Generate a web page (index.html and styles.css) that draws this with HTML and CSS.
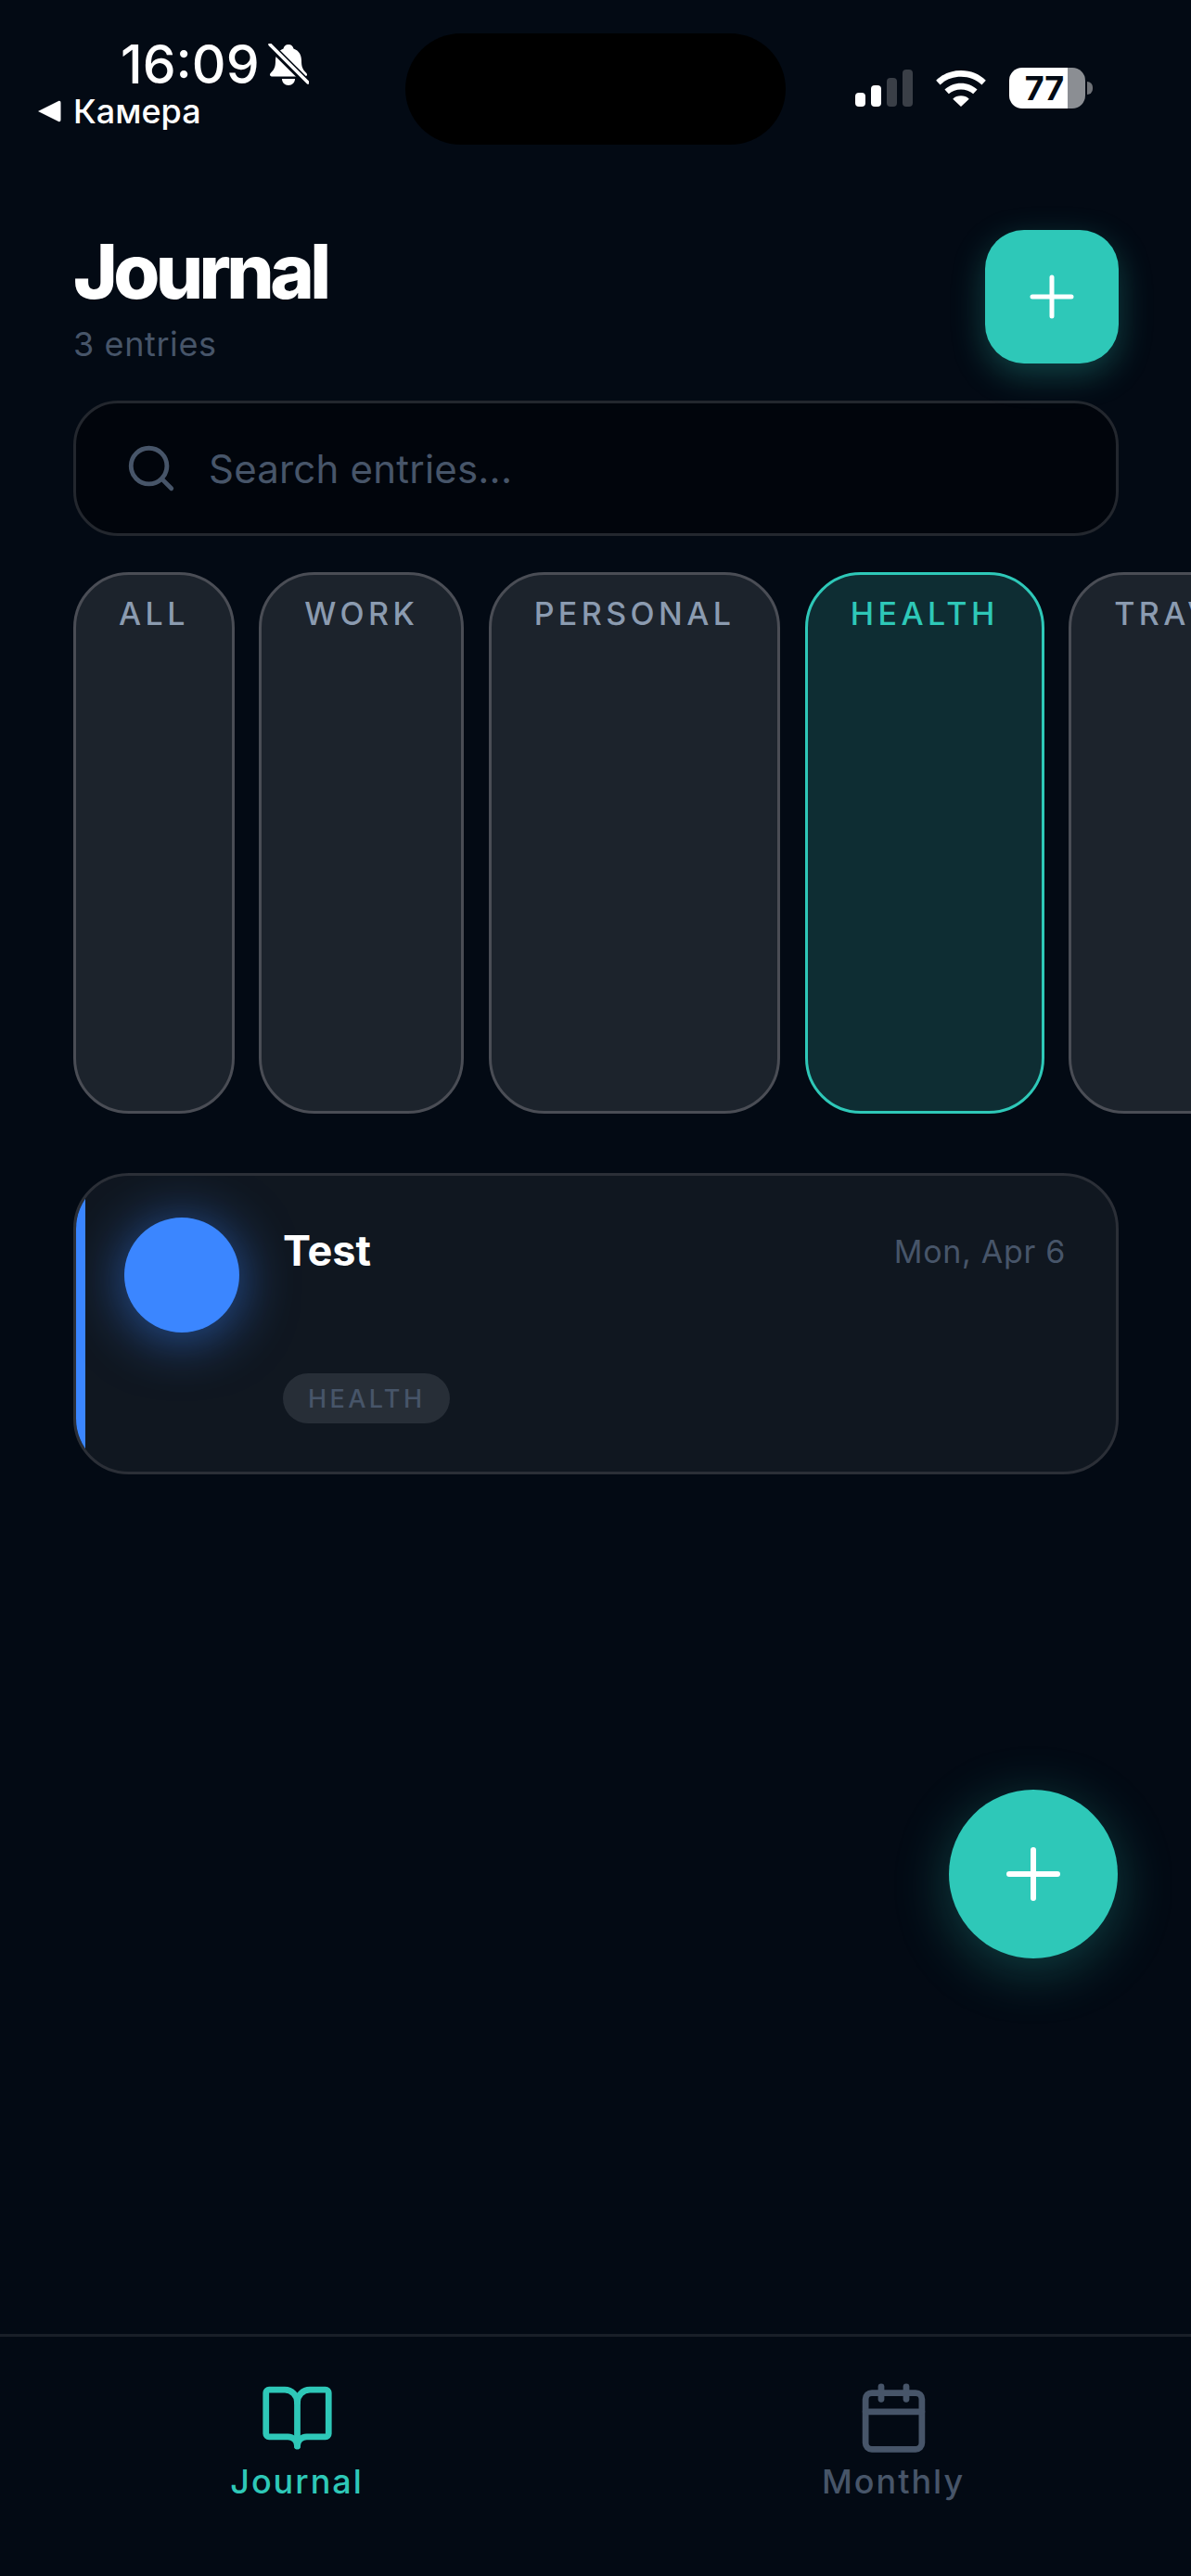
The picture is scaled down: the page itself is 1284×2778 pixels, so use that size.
FILE: index.html
```html
<!DOCTYPE html>
<html lang="en">
<head>
<meta charset="utf-8">
<title>Journal</title>
<link rel="stylesheet" href="styles.css">
</head>
<body>
<div class="phone">
  <header class="status">
    <div class="status-left">
      <div class="time-row">
        <span class="time">16:09</span>
        <svg class="bell" viewBox="0 0 44 46"><path fill="#fff" d="M22 1c3 0 5 2 5.500 4.500 6 2 8.500 7 8.500 13 0 6 1 9 5 13 2 2 1 4-2 4H5c-3 0-4-2-2-4 4-4 5-7 5-13 0-6 3-11 8.500-13C17 3 19 1 22 1zM15 38h14c0 4-3 7-7 7s-7-3-7-7z"/><path stroke="#030a14" stroke-width="8" d="M2 2l40 40"/><path stroke="#fff" stroke-width="3.500" stroke-linecap="round" d="M2 1l41 41"/></svg>
      </div>
      <div class="back-row">
        <svg class="back-arrow" viewBox="0 0 26 26"><path fill="#fff" d="M1 13L23 2c1.500-.6 2.500 0 2.500 2v18c0 2-1 2.600-2.500 2z"/></svg>
        <span class="back-label">Камера</span>
      </div>
    </div>
    <div class="status-right">
      <div class="signal">
        <i class="bar on b1"></i><i class="bar on b2"></i><i class="bar b3"></i><i class="bar b4"></i>
      </div>
      <svg class="wifi" viewBox="0 0 56 40"><path fill="#fff" d="M28 0c11 0 20.500 4 27.500 11l-4.500 5C45 10 37 7 28 7S11 10 5 16L.5 11C7.500 4 17 0 28 0zM28 14c7 0 13 2.500 18 7l-4.500 5c-3.500-3.200-8.500-5-13.500-5s-10 1.800-13.500 5L10 21c5-4.500 11-7 18-7zM28 28c3.500 0 6.500 1 9 3.500L28 40l-9-8.500c2.500-2.500 5.500-3.500 9-3.500z"/></svg>
      <div class="battery">
        <div class="battery-body"><span class="battery-num">77</span></div>
        <span class="battery-cap"></span>
      </div>
    </div>
  </header>
  <div class="island"></div>

  <main class="content">
    <section class="title-row">
      <div class="title-text">
        <h1 class="title">Journal</h1>
        <p class="count">3 entries</p>
      </div>
      <button class="add-btn" aria-label="Add">
        <svg class="plus" viewBox="0 0 48 48"><path d="M24 3v42M3 24h42"/></svg>
      </button>
    </section>

    <div class="search">
      <svg class="search-icon" viewBox="0 0 24 24"><circle cx="11" cy="11" r="8"/><path d="M21 21l-4.300-4.300"/></svg>
      <span class="search-text">Search entries...</span>
    </div>

    <div class="chips">
      <div class="chip">ALL</div>
      <div class="chip">WORK</div>
      <div class="chip">PERSONAL</div>
      <div class="chip active">HEALTH</div>
      <div class="chip">TRAVEL</div>
    </div>

    <article class="card">
      <div class="accent"></div>
      <div class="dot"></div>
      <div class="card-body">
        <div class="card-head">
          <span class="card-title">Test</span>
          <span class="card-date">Mon, Apr 6</span>
        </div>
        <span class="tag">HEALTH</span>
      </div>
    </article>
  </main>

  <button class="fab" aria-label="New entry">
    <svg class="fab-plus" viewBox="0 0 58 58"><path d="M29 3v52M3 29h52"/></svg>
  </button>

  <nav class="tabs">
    <div class="tab tab-active">
      <svg class="tab-icon" viewBox="0 0 24 24"><path d="M12 7v14"/><path d="M3 18a1 1 0 0 1-1-1V4a1 1 0 0 1 1-1h5a4 4 0 0 1 4 4 4 4 0 0 1 4-4h5a1 1 0 0 1 1 1v13a1 1 0 0 1-1 1h-6a3 3 0 0 0-3 3 3 3 0 0 0-3-3z"/></svg>
      <span class="tab-label">Journal</span>
    </div>
    <div class="tab">
      <svg class="tab-icon" viewBox="0 0 24 24"><path d="M8 2v4"/><path d="M16 2v4"/><rect x="3" y="4" width="18" height="18" rx="2"/><path d="M3 10h18"/></svg>
      <span class="tab-label">Monthly</span>
    </div>
  </nav>
</div>
</body>
</html>
```

FILE: styles.css
```css
* { box-sizing: border-box; }
html, body { margin: 0; padding: 0; background: #030a14; }
body { font-family: Inter, "Liberation Sans", sans-serif; color: #fff; }

.phone {
  position: relative;
  width: 1284px;
  height: 2778px;
  overflow: hidden;
  display: flex;
  flex-direction: column;
  background: #030a14;
}

/* status bar */
.status {
  height: 248px;
  flex: none;
  display: flex;
  justify-content: space-between;
  align-items: flex-start;
  padding: 39px 106px 0 40px;
}
.status-left { display: flex; flex-direction: column; }
.time-row { display: flex; align-items: center; gap: 9px; margin-left: 90px; height: 62px; }
.time { font-size: 57px; font-weight: 500; line-height: 62px; }
.bell { width: 44px; height: 46px; }
.back-row { display: flex; align-items: center; gap: 13px; height: 38px; }
.back-arrow { width: 26px; height: 26px; }
.back-label { font-size: 36px; font-weight: 500; line-height: 38px; }
.status-right { display: flex; align-items: flex-start; gap: 24px; margin-top: 34px; }
.signal { display: flex; align-items: flex-end; gap: 6px; height: 40px; margin-top: 2px; }
.bar { width: 11px; border-radius: 4px; background: #3a3f47; display: block; }
.bar.on { background: #fff; }
.b1 { height: 15px; }
.b2 { height: 23px; }
.b3 { height: 31px; }
.b4 { height: 40px; }
.wifi { width: 56px; height: 39px; margin-top: 3px; }
.battery { display: flex; align-items: center; gap: 2px; }
.battery-body {
  width: 82px;
  height: 44px;
  border-radius: 14px;
  overflow: hidden;
  background: linear-gradient(90deg, #fff 0 77%, #8b8e93 77%);
  display: flex;
  align-items: center;
  justify-content: center;
}
.battery-num { font-size: 36px; font-weight: 700; color: #030a14; line-height: 44px; margin-right: 6px; }
.battery-cap { width: 6px; height: 14px; background: #6f7277; border-radius: 0 6px 6px 0; }

.island {
  position: absolute;
  left: 437px;
  top: 36px;
  width: 410px;
  height: 120px;
  background: #000;
  border-radius: 60px;
}

/* content */
.content { flex: 1; padding: 0 78px 0 79px; }
.title-row { display: flex; justify-content: space-between; align-items: flex-start; height: 184px; }
.title { margin: 3px 0 0; font-size: 81px; font-weight: 800; line-height: 84px; letter-spacing: -4.600px; }
.count { margin: 14px 0 0; font-size: 36px; line-height: 44px; color: #475569; letter-spacing: .6px; }
.add-btn {
  width: 144px;
  height: 144px;
  border: 0;
  padding: 0;
  border-radius: 42px;
  background: #2ec8b8;
  box-shadow: 0 12px 36px rgba(45, 199, 182, .3);
  display: flex;
  align-items: center;
  justify-content: center;
}
.plus { width: 48px; height: 48px; fill: none; stroke: #fff; stroke-width: 5px; stroke-linecap: round; }

.search {
  height: 146px;
  border: 3px solid #23272e;
  border-radius: 48px;
  background: #01050c;
  display: flex;
  align-items: center;
  padding-left: 52px;
  gap: 33px;
}
.search-icon { width: 58px; height: 58px; fill: none; stroke: #475569; stroke-width: 2; stroke-linecap: round; }
.search-text { font-size: 42px; color: #475569; letter-spacing: .2px; }

.chips { display: flex; gap: 26.500px; margin-top: 39px; width: 1300px; }
.chip {
  height: 584px;
  flex: none;
  padding: 22px 46px 0;
  border: 3px solid #4a4d55;
  border-radius: 60px;
  background: #1c232c;
  color: #8b9bb0;
  font-size: 34px;
  font-weight: 500;
  line-height: 40px;
  letter-spacing: 4.400px;
  text-align: center;
}
.chip.active { background: #0e2d33; border-color: #2ec8b8; color: #2ec8b8; }

.card {
  display: flex;
  align-items: flex-start;
  height: 325px;
  margin-top: 64px;
  border: 3px solid #2b2f37;
  border-radius: 60px;
  background: #101720;
  overflow: hidden;
}
.accent { width: 10px; align-self: stretch; background: #3b86ff; flex: none; }
.dot {
  width: 124px;
  height: 124px;
  flex: none;
  margin: 45px 0 0 42px;
  border-radius: 50%;
  background: #3b86ff;
  box-shadow: 0 6px 60px rgba(59, 134, 255, .6);
}
.card-body { flex: 1; display: flex; flex-direction: column; align-items: flex-start; padding: 0 54px 0 47px; }
.card-head { width: 100%; display: flex; justify-content: space-between; align-items: center; margin-top: 51px; height: 60px; }
.card-title { font-size: 45px; font-weight: 700; line-height: 60px; color: #fff; }
.card-date { font-size: 34px; color: #475569; letter-spacing: .7px; }
.tag {
  margin-top: 102px;
  height: 54px;
  padding: 0 27px;
  border-radius: 27px;
  background: #272e37;
  color: #475569;
  font-size: 27px;
  font-weight: 500;
  line-height: 56px;
  letter-spacing: 3.400px;
}

/* floating action */
.fab {
  position: absolute;
  left: 1023px;
  top: 1930px;
  width: 182px;
  height: 182px;
  border: 0;
  padding: 0;
  border-radius: 50%;
  background: #2ec8b8;
  box-shadow: 0 12px 60px rgba(45, 199, 182, .3);
  display: flex;
  align-items: center;
  justify-content: center;
}
.fab-plus { width: 58px; height: 58px; fill: none; stroke: #fff; stroke-width: 6px; stroke-linecap: round; }

/* tabs */
.tabs {
  flex: none;
  height: 261px;
  border-top: 3px solid #191f28;
  display: flex;
  gap: 3px;
  padding-top: 47px;
  background: #030a14;
}
.tab { display: flex; flex-direction: column; align-items: center; flex: none; width: 640px; color: #475569; }
.tab-icon { width: 81px; height: 81px; fill: none; stroke: currentColor; stroke-width: 2; stroke-linecap: round; stroke-linejoin: round; }
.tab-label { margin-top: 6px; font-size: 36px; font-weight: 500; line-height: 44px; letter-spacing: 2px; }
.tab-active { color: #2ec8b8; }
```
